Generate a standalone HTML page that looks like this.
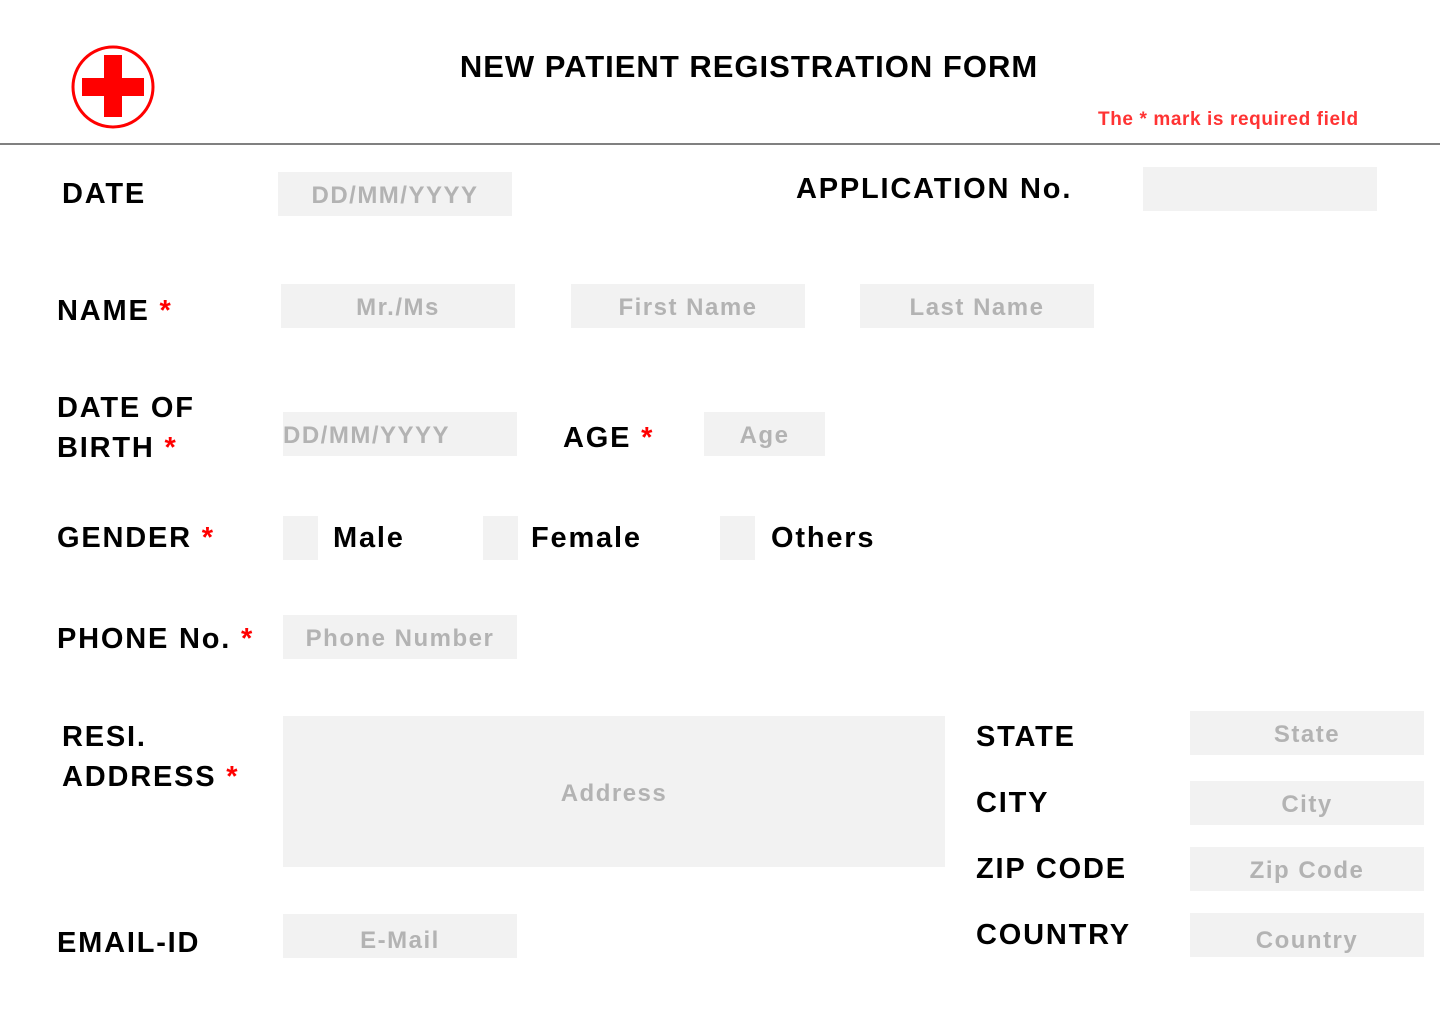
<!DOCTYPE html><html><head><style>
body{margin:0;width:1440px;height:1024px;background:#fff;position:relative;font-family:"Liberation Sans",sans-serif;font-weight:bold;overflow:hidden}
.a{position:absolute;white-space:nowrap}
.l{font-size:29px;color:#000;line-height:32px;letter-spacing:1.8px}
.r{color:#f00}
.b{position:absolute;background:#f2f2f2;color:#b3b3b3;font-size:24px;display:flex;align-items:center;justify-content:center;letter-spacing:1.5px;padding-top:4px;box-sizing:border-box}
</style></head><body>
<svg class="a" style="left:70px;top:44px" width="86" height="86" viewBox="0 0 86 86"><circle cx="43" cy="43" r="40" fill="none" stroke="#f00" stroke-width="3"/><rect x="12" y="34" width="62" height="18" fill="#f00"/><rect x="34" y="11" width="18" height="62" fill="#f00"/></svg>
<div class="a" style="left:448px;top:50px;font-size:31px;line-height:34px;width:602px;text-align:center;letter-spacing:1px">NEW PATIENT REGISTRATION FORM</div>
<div class="a" style="left:1098px;top:109px;font-size:19px;color:#f33;line-height:22px;letter-spacing:0.6px">The * mark is required field</div>
<div class="a" style="left:0;top:143px;width:1440px;height:2px;background:#808080"></div>

<div class="a l" style="left:62px;top:178px">DATE</div>
<div class="b" style="left:278px;top:172px;width:234px;height:44px">DD/MM/YYYY</div>
<div class="a l" style="left:796px;top:173px">APPLICATION No.</div>
<div class="b" style="left:1143px;top:167px;width:234px;height:44px"></div>

<div class="a l" style="left:57px;top:295px">NAME <span class="r">*</span></div>
<div class="b" style="left:281px;top:284px;width:234px;height:44px">Mr./Ms</div>
<div class="b" style="left:571px;top:284px;width:234px;height:44px">First Name</div>
<div class="b" style="left:860px;top:284px;width:234px;height:44px">Last Name</div>

<div class="a l" style="left:57px;top:388px;line-height:40px">DATE OF<br>BIRTH <span class="r">*</span></div>
<div class="b" style="left:283px;top:412px;width:234px;height:44px;justify-content:flex-start">DD/MM/YYYY</div>
<div class="a l" style="left:563px;top:422px">AGE <span class="r">*</span></div>
<div class="b" style="left:704px;top:412px;width:121px;height:44px">Age</div>

<div class="a l" style="left:57px;top:522px">GENDER <span class="r">*</span></div>
<div class="b" style="left:283px;top:516px;width:35px;height:44px"></div>
<div class="a l" style="left:333px;top:522px">Male</div>
<div class="b" style="left:483px;top:516px;width:35px;height:44px"></div>
<div class="a l" style="left:531px;top:522px">Female</div>
<div class="b" style="left:720px;top:516px;width:35px;height:44px"></div>
<div class="a l" style="left:771px;top:522px">Others</div>

<div class="a l" style="left:57px;top:623px">PHONE No. <span class="r">*</span></div>
<div class="b" style="left:283px;top:615px;width:234px;height:44px">Phone Number</div>

<div class="a l" style="left:62px;top:717px;line-height:40px">RESI.<br>ADDRESS <span class="r">*</span></div>
<div class="b" style="left:283px;top:716px;width:662px;height:151px">Address</div>

<div class="a l" style="left:976px;top:721px">STATE</div>
<div class="b" style="left:1190px;top:711px;width:234px;height:44px">State</div>
<div class="a l" style="left:976px;top:787px">CITY</div>
<div class="b" style="left:1190px;top:781px;width:234px;height:44px">City</div>
<div class="a l" style="left:976px;top:853px">ZIP CODE</div>
<div class="b" style="left:1190px;top:847px;width:234px;height:44px">Zip Code</div>
<div class="a l" style="left:976px;top:919px">COUNTRY</div>
<div class="b" style="left:1190px;top:913px;width:234px;height:44px;padding-top:12px">Country</div>

<div class="a l" style="left:57px;top:927px">EMAIL-ID</div>
<div class="b" style="left:283px;top:914px;width:234px;height:44px;padding-top:10px">E-Mail</div>
</body></html>
